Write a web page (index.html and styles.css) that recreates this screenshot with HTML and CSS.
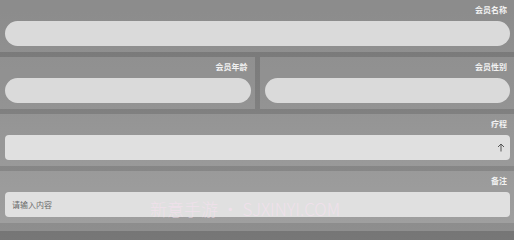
FILE: index.html
```html
<!DOCTYPE html>
<html lang="zh-CN">
<head>
<meta charset="utf-8">
<title>会员</title>
<link rel="stylesheet" href="styles.css">
</head>
<body>
<div class="form">
  <div class="card">
    <div class="label">会员名称</div>
    <div class="field pill"></div>
  </div>
  <div class="row">
    <div class="card">
      <div class="label">会员年龄</div>
      <div class="field pill"></div>
    </div>
    <div class="card">
      <div class="label">会员性别</div>
      <div class="field pill"></div>
    </div>
  </div>
  <div class="card">
    <div class="label">疗程</div>
    <div class="field box select">
      <svg class="arrow" width="8" height="9" viewBox="0 0 8 9"><path d="M4 8.5V1M1 4l3-3 3 3" fill="none" stroke="#555" stroke-width="1"/></svg>
    </div>
  </div>
  <div class="card">
    <div class="label">备注</div>
    <div class="field box"><span class="placeholder">请输入内容</span></div>
  </div>
</div>
<div class="watermark">新意手游 · SJXINYI.COM</div>
</body>
</html>
```
FILE: styles.css
```css
html, body {
  margin: 0;
  padding: 0;
}
body {
  width: 514px;
  height: 231px;
  overflow: hidden;
  position: relative;
  background: linear-gradient(to bottom, #767676 0%, #7f7f7f 45%, #8e8e8e 100%);
  font-family: "Noto Sans CJK SC", "Noto Sans", sans-serif;
}
.form {
  display: flex;
  flex-direction: column;
  gap: 5px;
}
.row {
  display: flex;
  gap: 5px;
}
.row .card {
  flex: 1;
}
.card {
  background: rgba(255, 255, 255, 0.16);
  padding: 4px 4px 6px 5px;
  display: flex;
  flex-direction: column;
}
.card.lower {
  background: rgba(255, 255, 255, 0.2);
}
.label {
  height: 12px;
  line-height: 12px;
  font-size: 8px;
  font-weight: 700;
  color: #f2f2f2;
  text-align: right;
  margin-bottom: 5px;
  padding-right: 3px;
}
.field {
  height: 25px;
  background: #dadada;
  box-sizing: border-box;
  display: flex;
  align-items: center;
}
.pill {
  border-radius: 13px;
}
.box {
  border-radius: 4px;
  background: #e0e0e0;
  padding: 0 7px;
}
.select {
  justify-content: flex-end;
  padding-right: 5px;
}
.arrow {
  display: block;
}
.placeholder {
  font-size: 8px;
  color: #6a6a6a;
}
.watermark {
  position: absolute;
  left: 150px;
  top: 199px;
  font-family: "Noto Sans CJK SC", "Noto Sans", sans-serif;
  font-size: 17px;
  font-weight: 300;
  line-height: 19px;
  color: rgba(250, 225, 242, 0.6);
  white-space: nowrap;
  pointer-events: none;
}
```
